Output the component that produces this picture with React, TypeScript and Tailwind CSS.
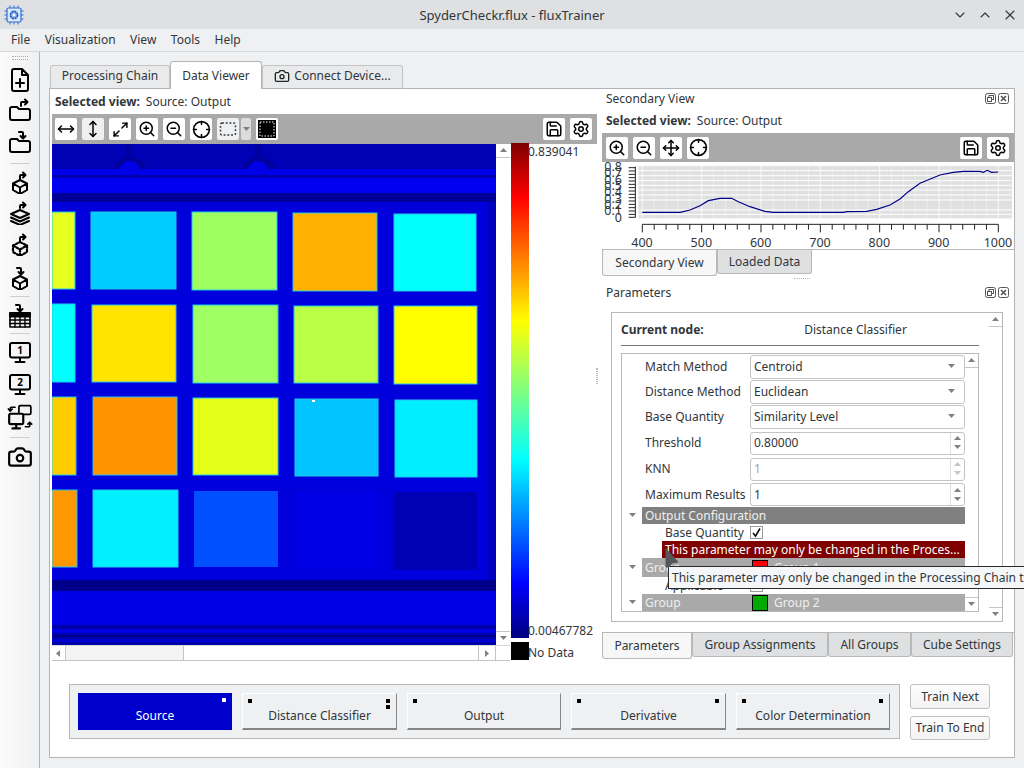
import React from "react";
import { ChevronDown, ChevronUp, X, Camera, MoveHorizontal, MoveVertical, Maximize2, ZoomIn, ZoomOut, Move, Save, Settings } from "lucide-react";

const S = (p: { children: React.ReactNode; w?: number; h?: number }) => (
  <svg width={p.w ?? 24} height={p.h ?? 24} viewBox="0 0 24 24" fill="none" stroke="#000" strokeWidth="2" strokeLinecap="round" strokeLinejoin="round">
    {p.children}
  </svg>
);

const folder = "M4 9h5l2 2h9a2 2 0 0 1 2 2v7a2 2 0 0 1-2 2H4a2 2 0 0 1-2-2V11a2 2 0 0 1 2-2z";
const cube = "M12 10l7 3.5v6.5l-7 4-7-4v-6.5zM5 13.5l7 4 7-4M12 17.5V24";
const arrowOut = "M12 9V6a1 1 0 0 1 1-1h4M15 2.5L17.5 5 15 7.5";
const arrowIn = "M9 2h3a1 1 0 0 1 1 1v5M10.5 6L13 8.5 15.5 6";

const FileAdd = () => <S><path d="M14 1H6a2 2 0 0 0-2 2v18a2 2 0 0 0 2 2h12a2 2 0 0 0 2-2V7zM14 1v6h6M12 11v8M8 15h8" /></S>;
const FolderOut = () => <S><path d={folder} /><path d="M13 8V5a1 1 0 0 1 1-1h5M17 1.5L19.5 4 17 6.5" /></S>;
const FolderIn = () => <S><path d={folder} /><path d="M11 2h3a1 1 0 0 1 1 1v5M12.5 6l2.5 2.5L17.5 6" /></S>;
const CubeOut = () => <S><path d={cube} /><path d={arrowOut} /></S>;
const CubeIn = () => <S><path d={cube} /><path d={arrowIn} /></S>;
const LayersOut = () => (
  <S>
    <path d="M12 9l9 4-9 4-9-4zM3 16.5l9 4 9-4M3 20l9 4 9-4" />
    <path d="M12 7V5a1 1 0 0 1 1-1h4M15 1.5L17.5 4 15 6.5" />
  </S>
);
const CubeDashed = () => (
  <S>
    <path d={cube} strokeDasharray="2 2" strokeWidth="2.2" />
    <path d={arrowOut} />
  </S>
);
const TableIn = () => (
  <S>
    <path d="M2 9h20v14H2z" strokeWidth="1.6" />
    <path d="M2 9h20v3.5H2z" fill="#000" />
    <path d="M2 16h20M2 19.5h20M7 12v11M12 12v11M17 12v11" strokeWidth="1.4" />
    <path d="M8 1h3a1 1 0 0 1 1 1v5M9.5 5L12 7.5 14.5 5" />
  </S>
);
const Monitor = ({ n }: { n: string }) => (
  <S>
    <rect x="2" y="3" width="20" height="14.5" rx="2" />
    <path d="M12 18v3.5M7.5 22h9" />
    <text x="12" y="14" textAnchor="middle" fontSize="10" fontWeight="700" fill="#000" stroke="none" fontFamily="'Noto Sans', sans-serif">{n}</text>
  </S>
);
const MonitorSwap = () => (
  <S w={26} h={26}>
    <rect x="11" y="1.5" width="11" height="8" rx="1.2" strokeWidth="1.6" />
    <rect x="2" y="9" width="13" height="9.5" rx="1.4" fill="#f4f4f5" />
    <path d="M8.5 19v3M5 22.5h7" />
    <path d="M7.5 3H4a1 1 0 0 0-1 1v2M1.2 4.6L3 6.6 4.8 4.6" strokeWidth="1.5" />
    <path d="M17 21h3a1 1 0 0 0 1-1v-3M19.2 18.6L21 16.8l1.8 1.8" strokeWidth="1.5" />
  </S>
);

const CrossCircle = () => (
  <svg width="19" height="19" viewBox="0 0 24 24" fill="none" stroke="#000" strokeWidth="2" strokeLinecap="round">
    <circle cx="12" cy="12" r="10" />
    <path d="M12 2v3.5M12 18.5V22M2 12h3.5M18.5 12H22" />
  </svg>
);
const DashRect = () => (
  <svg width="18" height="18" viewBox="0 0 24 24" fill="none" stroke="#333" strokeWidth="2" strokeDasharray="2.5 2.5">
    <rect x="2" y="4" width="20" height="16" rx="2" />
  </svg>
);
const BlackFrame = () => (
  <svg width="20" height="20" viewBox="0 0 20 20">
    <rect x="1" y="1" width="18" height="18" fill="#000" />
    <rect x="3" y="3" width="14" height="14" fill="none" stroke="#fff" strokeWidth="1" strokeDasharray="1.5 1.5" />
  </svg>
);

const TB = ({ children, grey }: { children: React.ReactNode; grey?: boolean }) => (
  <div className={"w-[22px] h-[22px] rounded-[2px] flex items-center justify-center shrink-0 " + (grey ? "bg-[#eff0f1]" : "bg-white")}>{children}</div>
);

const Arrow = ({ d, color = "#7f8082" }: { d: "u" | "d" | "l" | "r"; color?: string }) => {
  const pts = { u: "1,6 8,6 4.5,2", d: "1,2 8,2 4.5,6", l: "6,1 6,8 2,4.5", r: "2,1 2,8 6,4.5" }[d];
  return (
    <svg width="9" height="9" viewBox="0 0 9 9">
      <polygon points={pts} fill={color} />
    </svg>
  );
};

const VScrollbar = ({ w }: { w: string }) => (
  <div className={w + " shrink-0 bg-white flex flex-col justify-between"}>
    <div className="h-[14px] border-b border-[#c4c4c4] flex items-center justify-center"><Arrow d="u" /></div>
    <div className="h-[14px] border-t border-[#c4c4c4] flex items-center justify-center"><Arrow d="d" /></div>
  </div>
);

const squares: [number, number, number, number, string][] = [
  [52, 212, 75, 289, "#e6ff1e"], [91, 212, 176, 289, "#00ccff"], [192, 212, 277, 290, "#a0ff60"], [293, 213, 377, 291, "#ffb000"], [394, 214, 476, 291, "#00ffff"],
  [52, 304, 75, 382, "#00ffff"], [92, 305, 176, 382, "#ffe400"], [193, 305, 278, 383, "#a0ff62"], [294, 306, 378, 383, "#baff46"], [394, 306, 477, 384, "#ffff00"],
  [52, 397, 76, 475, "#ffcc00"], [93, 397, 177, 475, "#ff9400"], [193, 398, 278, 475, "#e4ff18"], [295, 399, 378, 476, "#00c4ff"], [395, 400, 477, 477, "#00eeff"],
  [52, 490, 77, 567, "#ff9800"], [93, 490, 178, 567, "#00f0ff"], [194, 491, 278, 567, "#0050ff"], [295, 492, 378, 568, "#0000e6"], [394, 492, 477, 570, "#0000b4"],
];

const HeatImage = () => (
  <svg width="444" height="501" viewBox="52 144 444 501" className="block">
    <rect x="52" y="144" width="444" height="501" fill="#0000dc" />
    <rect x="52" y="144" width="444" height="26" fill="#0000b4" />
    <rect x="126" y="144" width="6" height="14" fill="#0000a0" />
    <rect x="255" y="144" width="6" height="14" fill="#0000a0" />
    <path d="M114 170a16 13 0 0 1 32 0z" fill="#00009c" />
    <path d="M120 170a10 9 0 0 1 20 0z" fill="#0000e6" />
    <path d="M243 170a16 13 0 0 1 32 0z" fill="#00009c" />
    <path d="M248 170a10 9 0 0 1 20 0z" fill="#0000e6" />
    <rect x="52" y="169" width="444" height="6" fill="#0000e8" />
    <rect x="52" y="175" width="444" height="3" fill="#0000b0" />
    <rect x="52" y="178" width="444" height="15" fill="#0000f0" />
    <rect x="52" y="193" width="444" height="9" fill="#000096" />
    <rect x="488" y="202" width="8" height="378" fill="#0000c0" />
    {squares.map(([x1, y1, x2, y2, c], i) => (
      <rect key={i} x={x1} y={y1} width={x2 - x1} height={y2 - y1} fill={c} stroke={y1 > 490 && x1 > 190 ? "none" : "#22c8e8"} strokeWidth="1" />
    ))}
    <rect x="312" y="400" width="3" height="2" fill="#fff" />
    <rect x="52" y="580" width="444" height="11" fill="#00008a" />
    <rect x="52" y="591" width="444" height="34" fill="#0000e8" />
    <rect x="52" y="625" width="444" height="20" fill="#0000a8" />
    <rect x="52" y="629" width="444" height="4" fill="#0000e0" />
    <rect x="52" y="635" width="444" height="2" fill="#000090" />
    <rect x="52" y="639" width="444" height="3" fill="#0000d0" />
  </svg>
);

const curve = "127,382 240,382 270,375 300,362 325,347 360,340 395,340 415,350 450,365 495,379 520,382 730,382 740,380 800,379 830,373 870,360 900,342 925,320 960,295 1020,270 1060,262 1090,259 1140,259 1150,262 1162,256 1175,262 1195,261";

const Chart = () => {
  const ys = [257, 272, 287, 301, 315, 330, 345, 375, 388];
  const yt = [248, 258, 268, 278, 288, 298, 308, 318, 328, 338, 348, 358, 368, 378, 388, 397];
  const xt = Array.from({ length: 31 }, (_, i) => 127 + (i * (1195 - 127)) / 30);
  const labels = ["0", "0.1", "0.2", "0.3", "0.4", "0.5", "0.6", "0.7", "0.8"];
  return (
    <svg width="411" height="87" viewBox="602 162 411 87" className="block overflow-visible" fontFamily="'Noto Sans', sans-serif">
      <g transform="translate(600 85) scale(0.33333)">
        <rect x="115" y="243" width="1121" height="157" fill="#e0e0e0" />
        {xt.map((x, i) => <line key={i} x1={x} x2={x} y1="243" y2="400" stroke="#fff" strokeWidth={i % 5 === 0 ? 3 : 1.5} opacity="0.8" />)}
        {ys.map((y) => <line key={y} x1="115" x2="1236" y1={y} y2={y} stroke="#fff" strokeWidth="3" />)}
        <line x1="106" x2="106" y1="245" y2="398" stroke="#222" strokeWidth="3" />
        {yt.map((y) => <line key={y} x1="86" x2="106" y1={y} y2={y} stroke="#222" strokeWidth="3" />)}
        <line x1="127" x2="1195" y1="418" y2="418" stroke="#222" strokeWidth="3" />
        {xt.map((x, i) => <line key={"t" + i} x1={x} x2={x} y1="418" y2={i % 5 === 0 ? 442 : 434} stroke="#222" strokeWidth="3" />)}
        <polyline points={curve} fill="none" stroke="#000088" strokeWidth="3.5" />
      </g>
      {labels.map((l, i) => (
        <text key={l} x="622" y={221.5 - i * 6.3} textAnchor="end" fontSize="12.5" fill="#31363b">{l}</text>
      ))}
      {[400, 500, 600, 700, 800, 900, 1000].map((v, i) => (
        <text key={v} x={642 + i * 59.33} y="247" textAnchor="middle" fontSize="12.5" fill="#31363b">{v}</text>
      ))}
    </svg>
  );
};

const Combo = ({ v }: { v: string }) => (
  <div className="flex-1 h-[24px] border border-[#c4c4c4] rounded-[3px] bg-white flex items-center pl-[3px] pr-[8px]">
    <span className="flex-1">{v}</span>
    <Arrow d="d" />
  </div>
);
const Spin = ({ v, dis }: { v: string; dis?: boolean }) => (
  <div className={"flex-1 h-[23px] border border-[#c4c4c4] rounded-[3px] bg-white flex items-center pl-[3px] " + (dis ? "text-[#a0a2a4]" : "")}>
    <span className="flex-1">{v}</span>
    <div className="w-[14px] h-full border-l border-[#e0e0e0] flex flex-col items-center justify-center">
      <div className="h-[9px] flex items-center"><Arrow d="u" color={dis ? "#c4c4c4" : "#7f8082"} /></div>
      <div className="h-[9px] flex items-center"><Arrow d="d" color={dis ? "#c4c4c4" : "#7f8082"} /></div>
    </div>
  </div>
);
const ParamRow = ({ label, children, h }: { label: string; children: React.ReactNode; h: string }) => (
  <div className={h + " flex items-center pl-[23px] shrink-0"}>
    <span className="w-[105px] shrink-0">{label}</span>
    {children}
  </div>
);
const Tri = () => <div className="w-[20px] flex justify-center shrink-0"><Arrow d="d" /></div>;
const Check = ({ on }: { on?: boolean }) => (
  <div className="w-[13px] h-[13px] border border-[#9a9a9a] bg-white flex items-center justify-center">
    {on ? (
      <svg width="11" height="11" viewBox="0 0 11 11"><path d="M2 6l2.5 3L9 1.5" fill="none" stroke="#111" strokeWidth="1.6" /></svg>
    ) : null}
  </div>
);

const Dock = () => (
  <div className="flex gap-[2px] items-center">
    <svg width="11" height="11" viewBox="0 0 11 11" fill="none" stroke="#555"><rect x="0.5" y="0.5" width="10" height="10" rx="2" /><rect x="4" y="2.5" width="4.5" height="4" /><rect x="2.5" y="4.5" width="4" height="4" fill="#fff" /></svg>
    <svg width="11" height="11" viewBox="0 0 11 11" fill="none" stroke="#555"><rect x="0.5" y="0.5" width="10" height="10" rx="2" /><path d="M3 3l5 5M8 3l-5 5" strokeWidth="1.6" /></svg>
  </div>
);

const Selected = () => (
  <div className="flex items-center gap-[6px]">
    <span className="font-bold text-[#31363b]">Selected view:</span>
    <span>Source: Output</span>
  </div>
);

const Tab = ({ active, label, cls }: { active?: boolean; label: string; cls: string }) => (
  <div className={cls + " flex items-center justify-center shrink-0 border border-[#b8b8b8] border-t-0 rounded-b-[3px] " + (active ? "bg-[#f7f7f8] h-[26px]" : "bg-[#dfe0e2] h-[24px]")}>{label}</div>
);

const Node = ({ label, cls, active, two, leftDot = true, rightDot = true }: { label: string; cls: string; active?: boolean; two?: boolean; leftDot?: boolean; rightDot?: boolean }) => (
  <div className={cls + " h-[37px] relative flex items-end justify-center " + (active ? "bg-[#0000cc] text-white pb-[6px]" : "pb-[4px] bg-[#eff0f1] border-t border-l border-white border-b-2 border-r border-b-[#858585] border-r-[#858585]")}>
    {leftDot ? <div className="absolute left-[5px] top-[5px] w-[4px] h-[4px] bg-black" /> : null}
    {rightDot ? <div className={"absolute right-[6px] top-[5px] w-[4px] h-[4px] " + (active ? "bg-white" : "bg-black")} /> : null}
    {two ? <div className="absolute right-[6px] top-[11px] w-[4px] h-[4px] bg-black" /> : null}
    <span>{label}</span>
  </div>
);

const Sep = ({ cls }: { cls: string }) => <div className={cls + " w-[20px] h-px bg-[#cfcfcf] shrink-0"} />;

export default function App() {
  return (
    <div className="relative w-[1024px] h-[768px] overflow-hidden bg-[#eff0f1] text-[#31363b] text-[12px] leading-[16px] font-['Noto_Sans',sans-serif]">
      {/* Title bar */}
      <div className="h-[29px] bg-[#dee0e2] flex items-center text-[13px]">
        <div className="w-[90px] pl-[4px] flex">
          <svg width="20" height="20" viewBox="0 0 20 20" fill="none">
            <path d="M6 0.5v19M10 0.5v19M14 0.5v19M0.5 6h19M0.5 10h19M0.5 14h19" stroke="#2f6fd6" strokeWidth="1" />
            <rect x="3" y="3" width="14" height="14" rx="1.5" fill="#dbe7fa" stroke="#2f6fd6" strokeWidth="1.2" />
            <circle cx="10" cy="10" r="3.6" fill="#8fb6ee" stroke="#1f54b8" strokeWidth="1.6" strokeDasharray="2.2 0.6" />
            <circle cx="10" cy="10" r="1.3" fill="#fff" />
          </svg>
        </div>
        <div className="flex-1 text-center">SpyderCheckr.flux - fluxTrainer</div>
        <div className="w-[90px] flex items-center justify-end gap-[9px] pr-[6px] text-[#31363b]">
          <ChevronDown size={16} strokeWidth={1.6} />
          <ChevronUp size={16} strokeWidth={1.6} />
          <X size={16} strokeWidth={1.6} />
        </div>
      </div>
      {/* Menu */}
      <div className="h-[23px] flex items-center gap-[14.5px] pl-[11px] border-b border-[#d8d9db]">
        <span>File</span><span>Visualization</span><span>View</span><span>Tools</span><span>Help</span>
      </div>
      <div className="flex h-[716px]">
        {/* Left toolbar */}
        <div className="w-[40px] shrink-0 border-r border-[#b4b4b4] bg-[linear-gradient(90deg,#fbfbfb,#eff0f1)] flex flex-col items-center">
          <div className="mt-[4px] w-[16px] h-[4px] border-y border-dotted border-[#a8a8a8] shrink-0" />
          <div className="mt-[8px]"><FileAdd /></div>
          <div className="mt-[6px]"><FolderOut /></div>
          <div className="mt-[8px]"><FolderIn /></div>
          <Sep cls="mt-[9px]" />
          <div className="mt-[6px]"><CubeOut /></div>
          <div className="mt-[7px]"><LayersOut /></div>
          <div className="mt-[7px]"><CubeDashed /></div>
          <div className="mt-[10px]"><CubeIn /></div>
          <Sep cls="mt-[6px]" />
          <div className="mt-[7px]"><TableIn /></div>
          <Sep cls="mt-[5px]" />
          <div className="mt-[6px]"><Monitor n="1" /></div>
          <div className="mt-[8px]"><Monitor n="2" /></div>
          <div className="mt-[8px]"><MonitorSwap /></div>
          <Sep cls="mt-[7px]" />
          <div className="mt-[6px]"><Camera size={26} strokeWidth={2} color="#000" /></div>
        </div>
        {/* Main */}
        <div className="flex-1 pl-[9px] pr-[9px] pt-[9px] flex flex-col">
          <div className="flex items-end h-[28px] pl-[1px] relative z-10 -mb-px">
            <div className="w-[120px] h-[24px] pb-[2px] bg-[#e9eaeb] border border-[#c4c4c4] border-b-[#b4b4b4] rounded-t-[3px] flex items-center justify-center">Processing Chain</div>
            <div className="w-[92px] h-[28px] bg-white border border-[#b4b4b4] border-b-0 rounded-t-[3px] flex items-center justify-center">Data Viewer</div>
            <div className="w-[141px] h-[24px] pb-[2px] bg-[#e9eaeb] border border-[#c4c4c4] border-b-[#b4b4b4] rounded-t-[3px] flex items-center justify-center gap-[4px]"><Camera size={16} strokeWidth={2} color="#222" />Connect Device...</div>
          </div>
          <div className="w-[966px] h-[670px] bg-white border border-[#b4b4b4] flex flex-col">
            <div className="flex h-[587px]">
              {/* Left view */}
              <div className="w-[547px] shrink-0 pl-[2px] flex flex-col">
                <div className="h-[25px] flex items-center pl-[3px]"><Selected /></div>
                <div className="h-[30px] bg-[#a9a9a9] flex items-center pl-[3px] pr-[5px] gap-[5px]">
                  <TB><MoveHorizontal size={18} strokeWidth={2} color="#000" /></TB>
                  <TB grey><MoveVertical size={18} strokeWidth={2} color="#000" /></TB>
                  <TB><Maximize2 size={17} strokeWidth={2} color="#000" /></TB>
                  <TB><ZoomIn size={18} strokeWidth={2} color="#000" /></TB>
                  <TB><ZoomOut size={18} strokeWidth={2} color="#000" /></TB>
                  <TB><CrossCircle /></TB>
                  <TB grey><DashRect /></TB>
                  <div className="-ml-[3px] w-[10px] h-[22px] bg-[#dcdcdc] rounded-[2px] flex items-center justify-center"><Arrow d="d" /></div>
                  <TB><BlackFrame /></TB>
                  <div className="flex-1" />
                  <TB><Save size={18} strokeWidth={2} color="#000" /></TB>
                  <TB><Settings size={18} strokeWidth={2} color="#000" /></TB>
                </div>
                <div className="flex h-[517px]">
                  <div className="w-[458px] flex flex-col shrink-0">
                    <div className="flex h-[501px]">
                      <HeatImage />
                      <VScrollbar w="w-[14px]" />
                    </div>
                    <div className="h-[16px] flex border-y border-[#c4c4c4] border-t-[#d8d8d8] bg-white">
                      <div className="w-[14px] flex items-center justify-center border-r border-[#c4c4c4]"><Arrow d="l" /></div>
                      <div className="w-[118px] bg-[#f3f3f3] border-r border-[#c4c4c4]" />
                      <div className="flex-1" />
                      <div className="w-[18px] flex items-center justify-center border-x border-[#c4c4c4]"><Arrow d="r" /></div>
                      <div className="w-[14px]" />
                    </div>
                  </div>
                  <div className="w-[18px] shrink-0 ml-px -mt-px flex flex-col">
                    <div className="h-[495px] bg-[linear-gradient(180deg,#7f0000_0%,#ff0000_11%,#ffff00_36%,#80ff80_50%,#00ffff_64%,#0000ff_89%,#00007f_100%)]" />
                    <div className="h-[4px]" />
                    <div className="h-[18px] bg-black" />
                  </div>
                  <div className="flex-1 flex flex-col -mt-px -ml-px">
                    <div className="h-[17px] pt-px leading-[16px]">0.839041</div>
                    <div className="h-[474px]" />
                    <div className="h-[17px] leading-[14px]">0.00467782</div>
                    <div className="h-[4px]" />
                    <div className="leading-[16px]">No Data</div>
                  </div>
                </div>
              </div>
              {/* Right docks */}
              <div className="w-[417px] shrink-0 pl-[5px] flex flex-col relative">
                <div className="absolute left-[-1px] top-[279px] w-[2px] h-[16px] border-x border-dotted border-[#bbb]" />
                <div className="h-[19px] flex items-center justify-between pl-[4px] pr-[5px]"><span>Secondary View</span><Dock /></div>
                <div className="h-[25px] flex items-center pl-[4px]"><Selected /></div>
                <div className="h-[29px] bg-[#a9a9a9] flex items-center pl-[4px] pr-[5px] gap-[5px]">
                  <TB><ZoomIn size={18} strokeWidth={2} color="#000" /></TB>
                  <TB><ZoomOut size={18} strokeWidth={2} color="#000" /></TB>
                  <TB><Move size={18} strokeWidth={2} color="#000" /></TB>
                  <TB><CrossCircle /></TB>
                  <div className="flex-1" />
                  <TB><Save size={18} strokeWidth={2} color="#000" /></TB>
                  <TB><Settings size={18} strokeWidth={2} color="#000" /></TB>
                </div>
                <Chart />
                <div className="flex border-t border-[#b8b8b8] h-[26px] items-start">
                  <Tab active label="Secondary View" cls="w-[115px]" />
                  <Tab label="Loaded Data" cls="w-[95px]" />
                </div>
                <div className="h-[8px] flex justify-center items-center pr-[12px]"><div className="w-[16px] h-[3px] border-t border-dotted border-[#bbb]" /></div>
                <div className="h-[17px] flex items-center justify-between pl-[4px] pr-[5px] mt-[1px] shrink-0"><span>Parameters</span><Dock /></div>
                {/* Parameters */}
                <div className="ml-[9px] mt-[11px] w-[392px] h-[310px] border border-[#b8b8b8] flex shrink-0">
                  <div className="flex-1 pl-[9px] pr-[10px] flex flex-col">
                    <div className="h-[33px] pt-px flex items-center border-b border-[#7a7a7a] shrink-0">
                      <span className="font-bold w-[123px]">Current node:</span>
                      <span className="flex-1 text-center pr-[12px]">Distance Classifier</span>
                    </div>
                    <div className="mt-[7px] h-[259px] bg-white border border-[#b8b8b8] flex">
                      <div className="flex-1 flex flex-col overflow-hidden">
                        <ParamRow label="Match Method" h="h-[25px]"><Combo v="Centroid" /></ParamRow>
                        <ParamRow label="Distance Method" h="h-[25px]"><Combo v="Euclidean" /></ParamRow>
                        <ParamRow label="Base Quantity" h="h-[25px]"><Combo v="Similarity Level" /></ParamRow>
                        <div className="h-[1px] shrink-0" />
                        <ParamRow label="Threshold" h="h-[26px]"><Spin v="0.80000" /></ParamRow>
                        <ParamRow label="KNN" h="h-[26px]"><Spin v="1" dis /></ParamRow>
                        <ParamRow label="Maximum Results" h="h-[25px]"><Spin v="1" /></ParamRow>
                        <div className="h-[17px] flex shrink-0 items-center"><Tri /><div className="flex-1 h-full bg-[#808080] text-[#f0f0f0] pl-[3px] flex items-center">Output Configuration</div></div>
                        <div className="h-[17px] flex items-center pl-[43px] shrink-0"><span className="w-[85px]">Base Quantity</span><Check on /></div>
                        <div className="h-[17px] ml-[40px] bg-[#800000] text-white pl-[3px] flex items-center shrink-0 whitespace-nowrap overflow-hidden">This parameter may only be changed in the Proces...</div>
                        <div className="h-[19px] flex shrink-0 items-center"><Tri /><div className="flex-1 h-full bg-[#a9a9a9] text-[#f0f0f0] flex items-center pl-[3px]"><span className="w-[107px]">Group</span><div className="w-[16px] h-[16px] bg-[#ff0000] border border-black mr-[6px]" /><span>Group 1</span></div></div>
                        <div className="h-[17px] flex items-center pl-[43px] shrink-0"><span className="w-[85px]">Applicable</span><Check /></div>
                        <div className="h-[17px] flex shrink-0 items-center"><Tri /><div className="flex-1 h-full bg-[#a9a9a9] text-[#f0f0f0] flex items-center pl-[3px]"><span className="w-[107px]">Group</span><div className="w-[16px] h-[16px] bg-[#00aa00] border border-black mr-[6px]" /><span>Group 2</span></div></div>
                      </div>
                      <VScrollbar w="w-[13px]" />
                    </div>
                  </div>
                  <VScrollbar w="w-[13px]" />
                </div>
                <div className="flex mt-[10px] border-t border-[#b8b8b8] h-[28px] items-start w-[412px]">
                  <Tab active label="Parameters" cls="w-[90px]" />
                  <Tab label="Group Assignments" cls="w-[136px]" />
                  <Tab label="All Groups" cls="w-[83px]" />
                  <Tab label="Cube Settings" cls="w-[102px]" />
                </div>
              </div>
            </div>
            {/* Bottom chain */}
            <div className="flex pl-[19px] pt-[8px] gap-[10px]">
              <div className="w-[831px] h-[55px] bg-[#eff0f1] border border-[#b8b8b8] flex items-center pl-[8px] gap-[10px]">
                <Node label="Source" cls="w-[154px]" active leftDot={false} />
                <Node label="Distance Classifier" cls="w-[155px]" two />
                <Node label="Output" cls="w-[154px]" rightDot={false} />
                <Node label="Derivative" cls="w-[155px]" />
                <Node label="Color Determination" cls="w-[154px]" />
              </div>
              <div className="flex flex-col gap-[6px]">
                <div className="w-[80px] h-[25px] border border-[#c0c0c0] rounded-[3px] bg-[linear-gradient(180deg,#fdfdfd,#f3f3f3)] flex items-center justify-center">Train Next</div>
                <div className="w-[80px] h-[24px] mt-px border border-[#c0c0c0] rounded-[3px] bg-[linear-gradient(180deg,#fdfdfd,#f3f3f3)] flex items-center justify-center">Train To End</div>
              </div>
            </div>
          </div>
        </div>
      </div>
      {/* Tooltip */}
      <div className="absolute left-[668px] top-[566px] h-[23px] w-[400px] bg-[#f5f6f7] border border-[#2a2a2a] pl-[3px] flex items-center whitespace-nowrap text-[#31363b]">This parameter may only be changed in the Processing Chain tab.</div>
      {/* Cursor */}
      <svg className="absolute left-[665px] top-[548px]" width="14" height="22" viewBox="0 0 14 22">
        <path d="M1 1L1 19L4 19L7 15L13 14Z" fill="#55585a" stroke="#55585a" />
      </svg>
    </div>
  );
}
